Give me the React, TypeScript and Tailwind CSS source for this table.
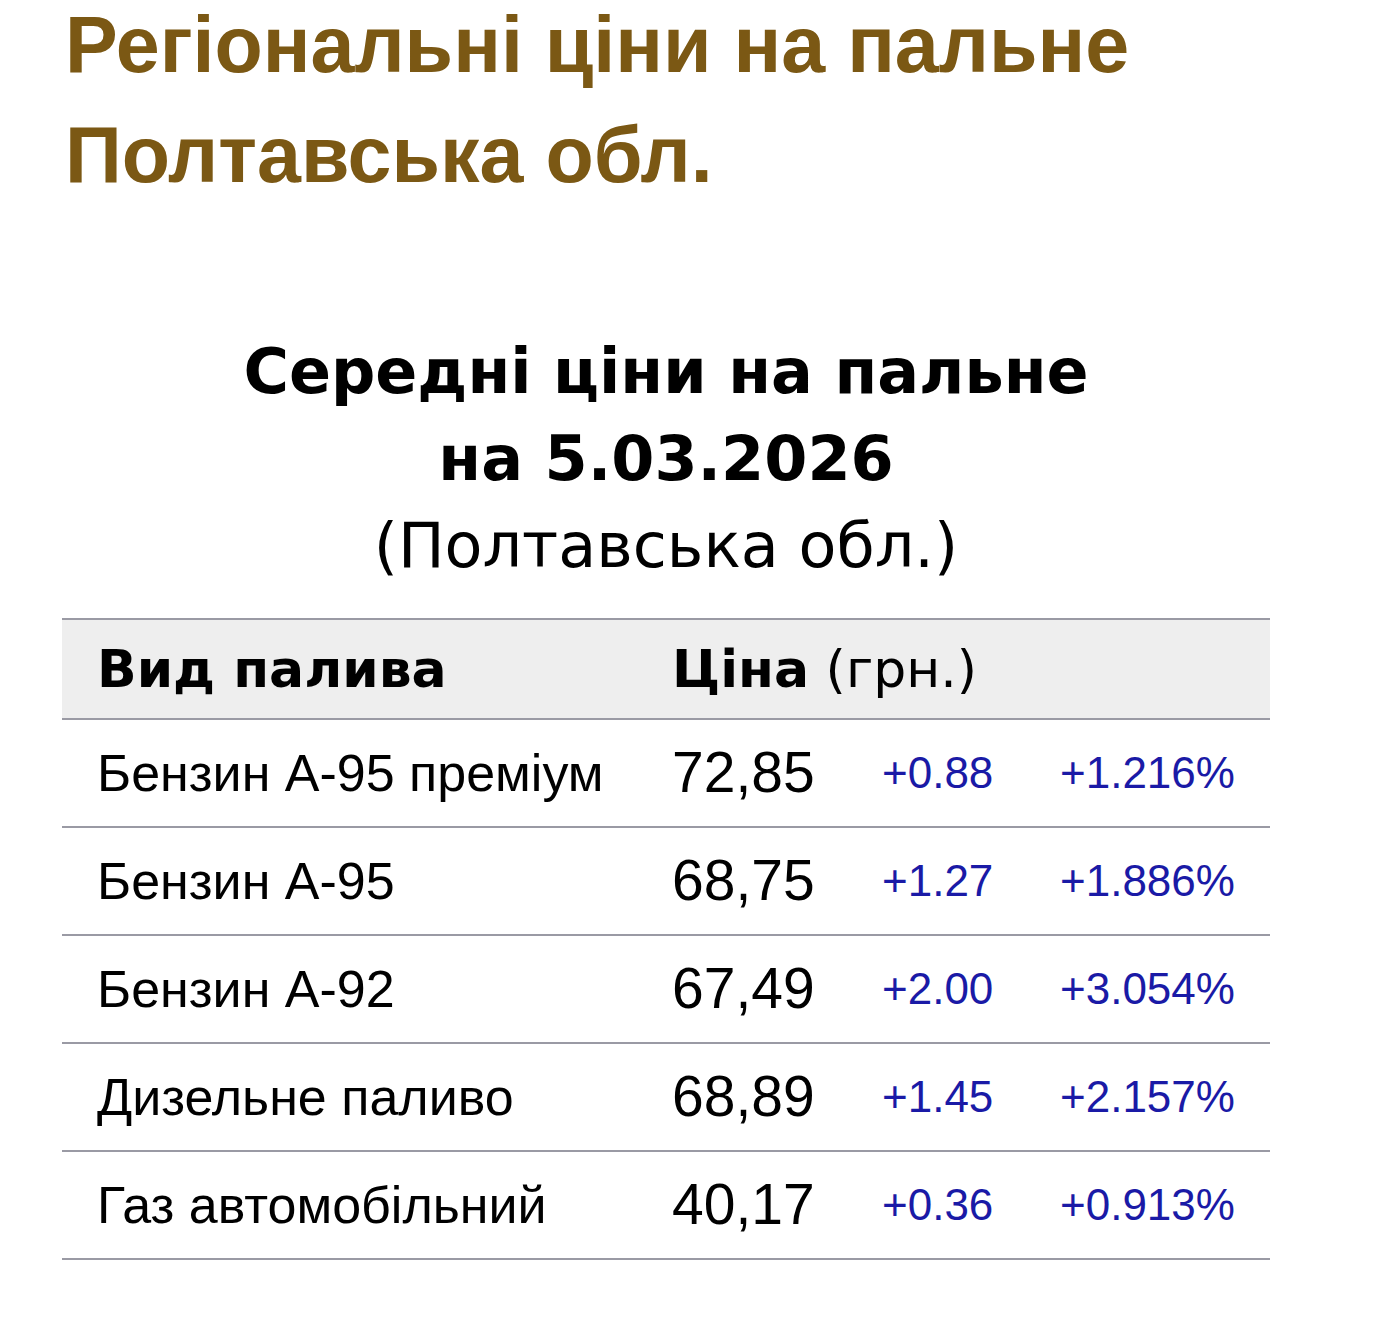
import React from 'react';

interface FuelRow {
  name: string;
  price: string;
  change: string;
  percent: string;
}

const rows: FuelRow[] = [
  { name: 'Бензин А-95 преміум', price: '72,85', change: '+0.88', percent: '+1.216%' },
  { name: 'Бензин А-95', price: '68,75', change: '+1.27', percent: '+1.886%' },
  { name: 'Бензин А-92', price: '67,49', change: '+2.00', percent: '+3.054%' },
  { name: 'Дизельне паливо', price: '68,89', change: '+1.45', percent: '+2.157%' },
  { name: 'Газ автомобільний', price: '40,17', change: '+0.36', percent: '+0.913%' },
];

const arial = "font-['Liberation_Sans',Arial,sans-serif]";
const verdana = "font-['DejaVu_Sans',Verdana,sans-serif]";

export default function App() {
  return (
    <div className="min-h-[1317px] bg-white overflow-hidden">
      <div className="w-[1208px] ml-[62px]">
        <h1 className={`${arial} -mt-[10px] pl-[3px] text-[79px] leading-[110px] font-bold text-[#7b5814]`}>
          Регіональні ціни на пальне
          <br />
          Полтавська обл.
        </h1>

        <div className={`${verdana} mt-[118px] text-center text-[62px] leading-[87px] text-black`}>
          <div className="font-bold">Середні ціни на пальне</div>
          <div className="font-bold">на 5.03.2026</div>
          <div>(Полтавська обл.)</div>
        </div>

        {/* Price table */}
        <table className="mt-[29px] w-full border-collapse table-fixed">
          <colgroup>
            <col className="w-[610px]" />
            <col className="w-[210px]" />
            <col className="w-[178px]" />
            <col />
          </colgroup>
          <thead>
            <tr className={`${verdana} bg-[#eeeeee] border-t-2 border-b-2 border-[#9a9aa4] h-[100px] text-[52px] text-black`}>
              <th className="pl-[35px] text-left font-bold">Вид палива</th>
              <th colSpan={3} className="text-left">
                <span className="font-bold">Ціна</span>
                <span className="font-normal"> (грн.)</span>
              </th>
            </tr>
          </thead>
          <tbody className={arial}>
            {rows.map((r) => (
              <tr key={r.name} className="h-[108px] border-b-2 border-[#9a9aa4]">
                <td className="pl-[35px] text-[52px] text-black">{r.name}</td>
                <td className="text-[57px] text-black">{r.price}</td>
                <td className="text-[44px] text-[#1a1aa6]">{r.change}</td>
                <td className="text-[44px] text-[#1a1aa6]">{r.percent}</td>
              </tr>
            ))}
          </tbody>
        </table>
      </div>
    </div>
  );
}
